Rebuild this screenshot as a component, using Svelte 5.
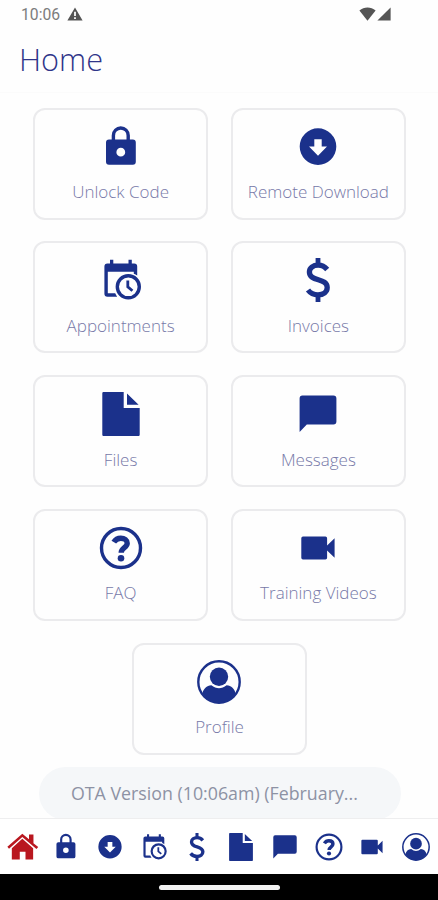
<script lang="ts">
  interface Item {
    icon: string;
    label: string;
  }

  const items: Item[] = [
    { icon: 'lock', label: 'Unlock Code' },
    { icon: 'download', label: 'Remote Download' },
    { icon: 'calendar', label: 'Appointments' },
    { icon: 'dollar', label: 'Invoices' },
    { icon: 'file', label: 'Files' },
    { icon: 'message', label: 'Messages' },
    { icon: 'help', label: 'FAQ' },
    { icon: 'video', label: 'Training Videos' },
    { icon: 'profile', label: 'Profile' },
  ];

  const tabs: Item[] = [{ icon: 'home', label: 'Home' }, ...items];

  let active = $state('home');
</script>

{#snippet glyph(name: string)}
  <svg class="icon" viewBox="0 0 44 44" aria-hidden="true">
    {#if name === 'home'}
      <path d="M-1 21.5 22.5 1 33 10V2.5h7V16l7.5 6-2.8 3L22.5 6.2 1.6 24.8z" />
      <path d="M6 24 22.5 9 39.5 24v17.6h-12V29.5h-9v12.1H6z" />
    {:else if name === 'lock'}
      <path class="line" stroke-width="3.4" d="M14.4 16v-5.6a7.4 7.4 0 0 1 14.8 0V16" />
      <path fill-rule="evenodd" d="M10 14.4h23.8a3 3 0 0 1 3 3v19.4a3 3 0 0 1-3 3H10a3 3 0 0 1-3-3V17.4a3 3 0 0 1 3-3zM21.8 22.8a4.4 4.4 0 1 0 0 8.8 4.4 4.4 0 0 0 0-8.8z" />
    {:else if name === 'download'}
      <path fill-rule="evenodd" d="M22 3.3a18.3 18.3 0 1 0 0 36.6 18.3 18.3 0 0 0 0-36.6zM18.3 14.3h7.4v7.2H31l-9 9.3-9-9.3h5.3z" />
    {:else if name === 'calendar'}
      <path d="M11 1.8h3.3v3.6h15.2V1.8h3.3v3.6h2.4a3 3 0 0 1 3 3v9.2a14 14 0 0 0-3.4-1.9v-1.9h-26v21.5h7.4a14 14 0 0 0 2 3.5H8.4a3 3 0 0 1-3-3V8.4a3 3 0 0 1 3-3H11z" />
      <circle class="line" stroke-width="3.4" cx="29.3" cy="28.8" r="11" />
      <path class="line" stroke-width="2.8" d="M28.8 22.4v6.4l4.6 4" />
    {:else if name === 'dollar'}
      <path class="line" stroke-width="5.3" d="M31.2 11.5C28.7 8.6 25.6 7.2 22.2 7.2c-5.2 0-8.8 2.6-8.8 6.8 0 10.2 17.8 5.4 17.8 15.6 0 4.4-3.8 7.2-9.2 7.2-4.2 0-7.6-1.6-10-4.8" />
      <path d="M19.6 0h4.8v7h-4.8zM19.6 37h4.8v7h-4.8z" />
    {:else if name === 'file'}
      <path d="M4.5 0h20.2v15.9h16v26.9a1.2 1.2 0 0 1-1.2 1.2h-35a1.2 1.2 0 0 1-1.2-1.2V1.2A1.2 1.2 0 0 1 4.5 0zM28 1.4 39.6 12.7H28z" />
    {:else if name === 'message'}
      <path d="M6.4 3.5h31a3 3 0 0 1 3 3v23a3 3 0 0 1-3 3H10.8L3.6 40V6.5a3 3 0 0 1 2.8-3z" />
    {:else if name === 'help'}
      <circle class="line" stroke-width="3.4" cx="22" cy="22" r="19.5" />
      <path class="line" stroke-width="5.4" d="M14.8 16.2c1.6-2.6 4-4 7-4 3.8 0 6.4 1.9 6.4 5.1 0 4.5-6 4.3-6 9.5" />
      <circle cx="22" cy="32.2" r="3.3" />
    {:else if name === 'video'}
      <path d="M7 10.6h22.4a1.7 1.7 0 0 1 1.7 1.7v7.2l7.5-7.2v19.4l-7.5-7.2v7.2a1.7 1.7 0 0 1-1.7 1.7H7a1.7 1.7 0 0 1-1.7-1.7V12.3A1.7 1.7 0 0 1 7 10.6z" />
    {:else if name === 'profile'}
      <circle class="line" stroke-width="2.4" cx="22" cy="22" r="20.7" />
      <circle cx="22" cy="16.8" r="9.2" />
      <path d="M5.4 33.4c1-4.6 4.2-8 9-8.2 4.8 4 10.4 4 15.2 0 4.8.2 8 3.6 9 8.2A20.5 20.5 0 0 1 22 43 20.5 20.5 0 0 1 5.4 33.4z" />
    {/if}
  </svg>
{/snippet}

<div class="screen">
  <div class="status">
    <span class="clock">10:06</span>
    <svg class="warn" viewBox="0 0 16 14" aria-hidden="true">
      <path fill-rule="evenodd" d="M8 .4 15.6 13.5H.4zM7.1 4.8h1.8v4.2H7.1zM7.1 10.3h1.8v1.6H7.1z" />
    </svg>
    <svg class="wifi" viewBox="0 0 17 14" aria-hidden="true">
      <path d="M8.5 13.8.4 3.4C5-.5 12-.5 16.6 3.4z" />
    </svg>
    <svg class="signal" viewBox="0 0 14 14" aria-hidden="true">
      <path d="M13.6.4v13.2H.4z" />
    </svg>
  </div>

  <header>
    <h1>Home</h1>
  </header>

  <main>
    <div class="cards">
      {#each items as item (item.icon)}
        <button class="card">
          {@render glyph(item.icon)}
          <span class="label">{item.label}</span>
        </button>
      {/each}
    </div>
    <div class="version">OTA Version (10:06am) (February...</div>
  </main>

  <nav>
    {#each tabs as tab (tab.icon)}
      <button
        class="tab"
        class:active={tab.icon === active}
        aria-label={tab.label}
        onclick={() => (active = tab.icon)}
      >
        {@render glyph(tab.icon)}
      </button>
    {/each}
  </nav>

  <div class="system-bar"><span class="handle"></span></div>
</div>

<style>
  :global(body) {
    margin: 0;
    background: #fefefe;
  }
  .screen {
    display: flex;
    flex-direction: column;
    height: 900px;
    overflow: hidden;
    background: #fefefe;
    font-family: 'Open Sans', 'Noto Sans', sans-serif;
    font-weight: 300;
  }
  button {
    margin: 0;
    padding: 0;
    border: 0;
    background: none;
    font: inherit;
  }
  .icon {
    display: block;
    overflow: visible;
    fill: currentColor;
  }
  .line {
    fill: none;
    stroke: currentColor;
  }
  .status {
    display: flex;
    align-items: center;
    flex: none;
    height: 28px;
    padding: 0 47px 0 21px;
    color: #7c7c7c;
    font-family: Roboto, sans-serif;
    font-size: 15.7px;
    font-weight: 400;
  }
  .status svg {
    fill: #555;
  }
  .warn {
    width: 16px;
    height: 14px;
    margin: 0 auto 0 7px;
  }
  .wifi {
    width: 17px;
    height: 14px;
    margin-right: 1px;
  }
  .signal {
    width: 14px;
    height: 14px;
  }
  header {
    display: flex;
    align-items: center;
    flex: none;
    height: 65px;
    padding: 0 0 2px 19px;
    box-sizing: border-box;
    border-bottom: 1px solid #fbfbfb;
  }
  h1 {
    margin: 0;
    color: #2f3589;
    font-size: 30.7px;
    font-weight: 300;
    line-height: 40px;
  }
  main {
    display: flex;
    flex-direction: column;
    align-items: center;
    flex: 1;
    min-height: 0;
    padding: 14.5px 0 0 1px;
    overflow: hidden;
  }
  .cards {
    display: flex;
    flex-wrap: wrap;
    justify-content: center;
    flex: none;
    gap: 21.8px 22.4px;
    width: 373.4px;
  }
  .card {
    display: flex;
    flex-direction: column;
    align-items: center;
    box-sizing: border-box;
    width: 175.4px;
    height: 112px;
    padding-top: 15px;
    border: 2px solid #ebebed;
    border-radius: 12px;
    color: #1b318b;
  }
  .card .icon {
    width: 44px;
    height: 44px;
  }
  .label {
    margin-top: 11.5px;
    color: #7779a8;
    font-size: 17px;
    line-height: 24px;
    white-space: nowrap;
  }
  .version {
    flex: none;
    box-sizing: border-box;
    width: 362px;
    height: 53px;
    margin-top: 12.5px;
    padding-left: 32.5px;
    border-radius: 27px;
    background: #f5f7f9;
    color: #8d92a4;
    font-size: 17.8px;
    font-weight: 400;
    line-height: 52px;
    white-space: nowrap;
  }
  nav {
    display: flex;
    flex: none;
    box-sizing: border-box;
    height: 56px;
    padding-left: 0.5px;
    border-top: 1px solid #eeeeef;
    background: #fff;
  }
  .tab {
    display: flex;
    align-items: center;
    justify-content: center;
    flex: 1;
    color: #1b318b;
  }
  .tab.active {
    color: #b9171f;
  }
  .tab .icon {
    width: 28px;
    height: 28px;
  }
  .system-bar {
    display: flex;
    align-items: center;
    justify-content: center;
    flex: none;
    height: 26px;
    background: #000;
  }
  .handle {
    width: 121px;
    height: 5px;
    border-radius: 3px;
    background: #f2f2f2;
  }
</style>
